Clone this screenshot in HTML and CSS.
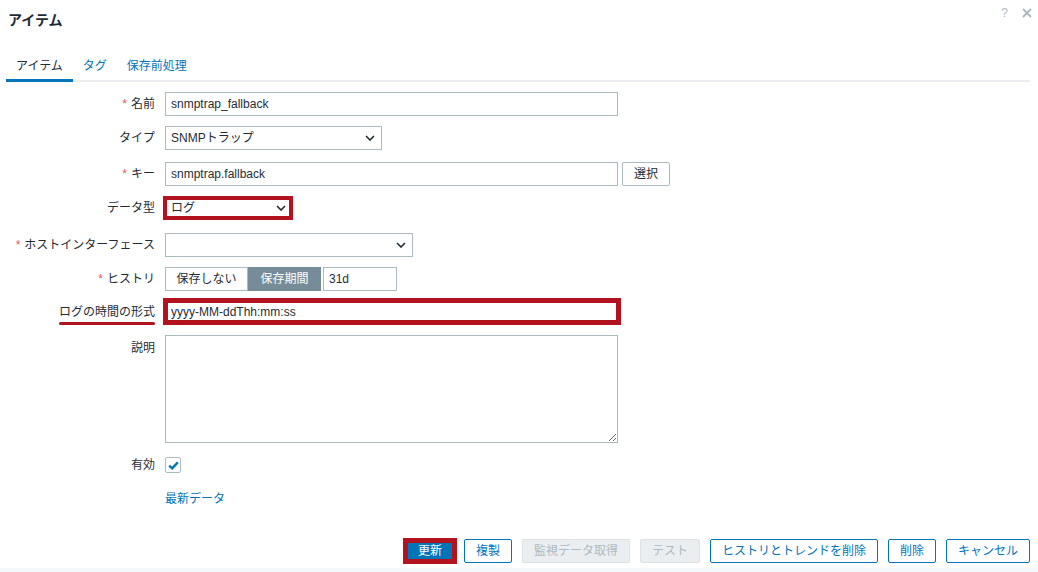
FILE: index.html
```html
<!DOCTYPE html>
<html lang="ja">
<head>
<meta charset="utf-8">
<title>アイテム</title>
<link rel="stylesheet" href="styles.css">
</head>
<body>
<div class="dialog">
  <div class="header">
    <h4 class="title">アイテム</h4>
    <div class="header-tools">
      <span class="help">?</span>
      <svg class="close" width="10" height="10" viewBox="0 0 10 10"><path d="M1 1 L9 9 M9 1 L1 9" stroke="#acb8bf" stroke-width="1.8" fill="none"/></svg>
    </div>
  </div>

  <div class="tabs">
    <a class="tab active">アイテム</a>
    <a class="tab">タグ</a>
    <a class="tab">保存前処理</a>
  </div>

  <div class="form">
    <div class="lbl"><span class="req">*</span>名前</div>
    <div class="field"><input class="text w-wide" value="snmptrap_fallback" readonly></div>

    <div class="lbl">タイプ</div>
    <div class="field"><div class="select w-type"><span>SNMPトラップ</span><svg class="chev" width="10" height="6" viewBox="0 0 10 6"><path d="M1 1 L5 5 L9 1" stroke="#1f2c33" stroke-width="1.6" fill="none"/></svg></div></div>

    <div class="lbl shift2"><span class="req">*</span>キー</div>
    <div class="field row-inline shift2"><input class="text w-wide" value="snmptrap.fallback" readonly><button class="btn btn-grey">選択</button></div>

    <div class="lbl">データ型</div>
    <div class="field"><div class="select hl-select"><span>ログ</span><svg class="chev" width="10" height="6" viewBox="0 0 10 6"><path d="M1 1 L5 5 L9 1" stroke="#1f2c33" stroke-width="1.6" fill="none"/></svg></div></div>

    <div class="lbl shift3"><span class="req">*</span>ホストインターフェース</div>
    <div class="field shift3"><div class="select w-host"><span></span><svg class="chev" width="10" height="6" viewBox="0 0 10 6"><path d="M1 1 L5 5 L9 1" stroke="#1f2c33" stroke-width="1.6" fill="none"/></svg></div></div>

    <div class="lbl"><span class="req">*</span>ヒストリ</div>
    <div class="field row-inline">
      <div class="seg">
        <span class="seg-btn seg-off">保存しない</span><span class="seg-btn seg-on">保存期間</span>
      </div>
      <input class="text w-period" value="31d" readonly>
    </div>

    <div class="lbl shiftup"><span class="marked">ログの時間の形式</span></div>
    <div class="field shiftup"><input class="text hl-input" value="yyyy-MM-ddThh:mm:ss" readonly></div>

    <div class="lbl lbl-top">説明</div>
    <div class="field"><textarea class="textarea" readonly></textarea></div>

    <div class="lbl">有効</div>
    <div class="field"><span class="checkbox"><svg width="11" height="9" viewBox="0 0 11 9"><path d="M1.2 4.6 L4.2 7.4 L9.8 1.4" stroke="#0275b8" stroke-width="2.4" fill="none"/></svg></span></div>

    <div class="lbl"></div>
    <div class="field"><a class="link">最新データ</a></div>
  </div>

  <div class="footer">
    <button class="btn btn-primary">更新</button>
    <button class="btn btn-alt">複製</button>
    <button class="btn btn-disabled">監視データ取得</button>
    <button class="btn btn-disabled">テスト</button>
    <button class="btn btn-alt">ヒストリとトレンドを削除</button>
    <button class="btn btn-alt">削除</button>
    <button class="btn btn-alt">キャンセル</button>
  </div>
  <div class="bottom-band"></div>
</div>
</body>
</html>
```

FILE: styles.css
```css
* { box-sizing: border-box; }

body {
  margin: 0;
  font-family: "Liberation Sans", "Noto Sans CJK JP", sans-serif;
  font-size: 12px;
  line-height: 14px;
  color: #1f2c33;
  background: #fff;
}

.dialog {
  height: 572px;
  display: flex;
  flex-direction: column;
  padding: 0 8px 0 6px;
  overflow: hidden;
}

/* header */
.header {
  height: 38px;
  display: flex;
  justify-content: space-between;
  align-items: flex-start;
  padding-left: 2px;
}
.title {
  margin: 0;
  padding-top: 10px;
  font-size: 14px;
  line-height: 20px;
  font-weight: bold;
}
.header-tools {
  display: flex;
  align-items: center;
  gap: 14px;
  padding-top: 6px;
  margin-right: -2px;
  color: #acb8bf;
}
.help { font-size: 12px; line-height: 14px; }
.close { display: block; }

/* tabs */
.tabs {
  display: flex;
  height: 44px;
  border-bottom: 2px solid #ebeef0;
}
.tab {
  display: block;
  height: 44px;
  padding: 21px 10px 0;
  line-height: 14px;
  color: #0275b8;
  text-decoration: none;
}
.tab.active {
  color: #1f2c33;
  border-bottom: 3px solid #0275b8;
}

/* form */
.form {
  display: grid;
  grid-template-columns: 149px 1fr;
  grid-auto-rows: minmax(24px, auto);
  column-gap: 10px;
  row-gap: 10px;
  margin-top: 10px;
  align-items: center;
}
.lbl {
  justify-self: end;
  text-align: right;
  white-space: nowrap;
}
.lbl-top {
  align-self: start;
  padding-top: 6px;
}
.shift2 { margin-top: 2px; }
.shift3 { margin-top: 3px; }
.shiftup { margin-top: -3px; }
.req {
  color: #e45959;
  margin-right: 4px;
}
.marked {
  display: inline-block;
  padding-top: 6px;
}
.marked::after {
  content: "";
  display: block;
  height: 3px;
  margin-top: 3px;
  background: #b3121f;
  border-radius: 2px;
}

.field { display: block; }
.row-inline {
  display: flex;
  align-items: center;
}

.text {
  display: block;
  height: 24px;
  border: 1px solid #acbbc2;
  border-radius: 0;
  padding: 0 5px;
  font: inherit;
  color: #1f2c33;
  background: #fff;
  outline: none;
}
.w-wide { width: 453px; }
.w-period { width: 74px; margin-left: 2px; }

.select {
  height: 24px;
  border: 1px solid #acbbc2;
  display: flex;
  align-items: center;
  justify-content: space-between;
  padding: 0 6px 0 5px;
  background: #fff;
}
.w-type { width: 217px; }
.w-host { width: 248px; }
.chev { display: block; }

.hl-select {
  width: 130px;
  margin-left: -2px;
  border: 4px solid #b3121f;
  padding: 0 3px 0 4px;
}
.hl-input {
  width: 458px;
  height: 27px;
  margin-left: -2px;
  border: 5px solid #b3121f;
  padding: 0 3px;
}

.seg { display: flex; }
.seg-btn {
  height: 24px;
  display: flex;
  align-items: center;
  justify-content: center;
  border: 1px solid #acbbc2;
}
.seg-off { width: 83px; background: #fff; }
.seg-on {
  width: 73px;
  background: #768d99;
  border-color: #768d99;
  color: #fff;
}

.textarea {
  display: block;
  width: 453px;
  height: 108px;
  border: 1px solid #acbbc2;
  border-radius: 0;
  font: inherit;
  padding: 4px 5px;
  outline: none;
  margin: 0;
}

.checkbox {
  width: 16px;
  height: 16px;
  border: 1px solid #acbbc2;
  border-radius: 2px;
  display: flex;
  align-items: center;
  justify-content: center;
  background: #fff;
}
.checkbox svg { display: block; }

.link {
  color: #0275b8;
  text-decoration: none;
}

/* buttons */
.btn {
  height: 24px;
  padding: 0 11px;
  font: inherit;
  line-height: 14px;
  border-radius: 2px;
  border: 1px solid #0275b8;
  background: #fff;
  color: #0275b8;
  white-space: nowrap;
}
.btn-grey {
  margin-left: 4px;
  border-color: #acbbc2;
  color: #1f2c33;
}
.btn-alt { }
.btn-disabled {
  background: #ebeef0;
  border-color: #dce1e4;
  color: #acbbc2;
}
.btn-primary {
  width: 54px;
  height: 26px;
  padding: 0;
  margin: 0 -3px;
  border: 5px solid #b3121f;
  border-radius: 0;
  background: #0275b8;
  color: #fff;
}

.footer {
  margin-top: auto;
  display: flex;
  justify-content: flex-end;
  align-items: center;
  gap: 10px;
  padding-bottom: 4px;
}
.bottom-band {
  height: 4px;
  margin: 0 -8px 0 -6px;
  background: #f4f8fa;
}
```
